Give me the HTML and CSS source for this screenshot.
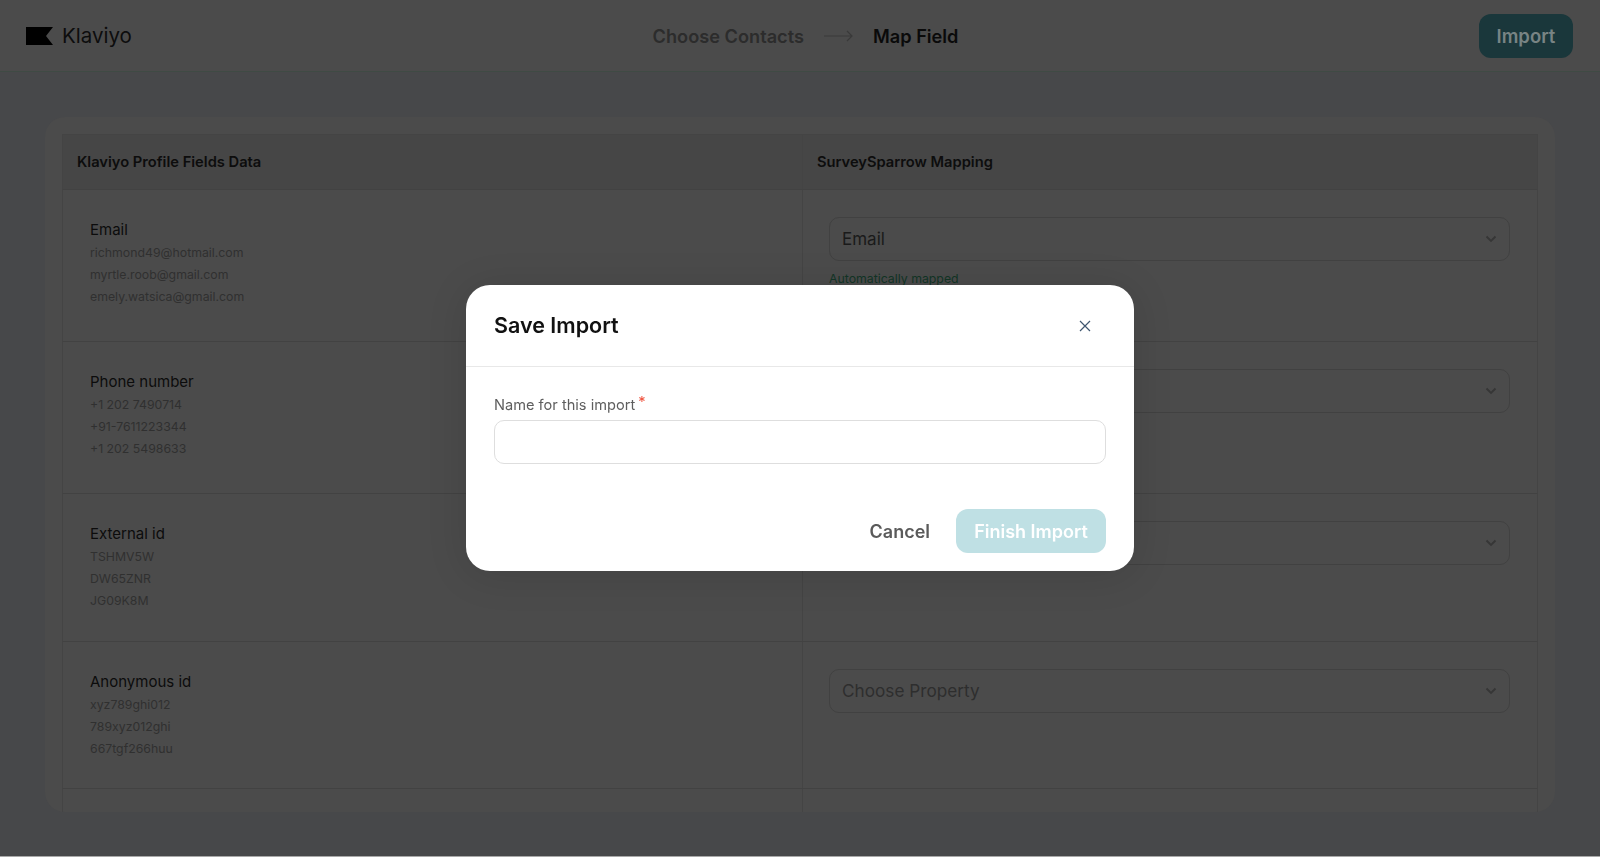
FILE: index.html
```html
<!DOCTYPE html>
<html lang="en">
<head>
  <meta charset="UTF-8" />
  <meta name="viewport" content="width=device-width, initial-scale=1.0" />
  <title>Map Field - Klaviyo Import</title>
  <link rel="stylesheet" href="styles.css">
</head>
<body>
  <div class="page">
    <header class="topbar">
      <div class="brand">
        <svg class="brand-flag" width="27" height="18" viewBox="0 0 27 18"><polygon points="0,0 27,0 20,9 27,18 0,18" fill="#000"/></svg>
        <span class="brand-name">Klaviyo</span>
      </div>
      <div class="steps">
        <span class="step">Choose Contacts</span>
        <svg class="step-arrow" width="29" height="12" viewBox="0 0 29 12"><path d="M0 6H28M23 1l5 5-5 5" fill="none" stroke="#3a3a3a" stroke-width="1.2"/></svg>
        <span class="step step-active">Map Field</span>
      </div>
      <button class="btn-import">Import</button>
    </header>

    <main class="content">
      <section class="card">
        <div class="table">
          <div class="row row-head">
            <div class="cell-head">Klaviyo Profile Fields Data</div>
            <div class="cell-head">SurveySparrow Mapping</div>
          </div>

          <div class="row">
            <div class="cell-left">
              <div class="field-name">Email</div>
              <div class="field-value">richmond49@hotmail.com</div>
              <div class="field-value">myrtle.roob@gmail.com</div>
              <div class="field-value">emely.watsica@gmail.com</div>
            </div>
            <div class="cell-right">
              <div class="select"><span class="select-text">Email</span><svg class="chev" width="12" height="8" viewBox="0 0 12 8"><path d="M1.5 1.5 6 6l4.5-4.5" fill="none" stroke="#363636" stroke-width="1.8"/></svg></div>
              <div class="mapped">Automatically mapped</div>
            </div>
          </div>

          <div class="row">
            <div class="cell-left">
              <div class="field-name">Phone number</div>
              <div class="field-value">+1 202 7490714</div>
              <div class="field-value">+91-7611223344</div>
              <div class="field-value">+1 202 5498633</div>
            </div>
            <div class="cell-right">
              <div class="select"><svg class="chev" width="12" height="8" viewBox="0 0 12 8"><path d="M1.5 1.5 6 6l4.5-4.5" fill="none" stroke="#363636" stroke-width="1.8"/></svg></div>
              <div class="mapped"></div>
            </div>
          </div>

          <div class="row">
            <div class="cell-left">
              <div class="field-name">External id</div>
              <div class="field-value">TSHMV5W</div>
              <div class="field-value">DW65ZNR</div>
              <div class="field-value">JG09K8M</div>
            </div>
            <div class="cell-right">
              <div class="select"><svg class="chev" width="12" height="8" viewBox="0 0 12 8"><path d="M1.5 1.5 6 6l4.5-4.5" fill="none" stroke="#363636" stroke-width="1.8"/></svg></div>
            </div>
          </div>

          <div class="row">
            <div class="cell-left">
              <div class="field-name">Anonymous id</div>
              <div class="field-value">xyz789ghi012</div>
              <div class="field-value">789xyz012ghi</div>
              <div class="field-value">667tgf266huu</div>
            </div>
            <div class="cell-right">
              <div class="select"><span class="select-text select-empty">Choose Property</span><svg class="chev" width="12" height="8" viewBox="0 0 12 8"><path d="M1.5 1.5 6 6l4.5-4.5" fill="none" stroke="#363636" stroke-width="1.8"/></svg></div>
            </div>
          </div>

          <div class="row row-last">
            <div class="cell-left"></div>
            <div class="cell-right"></div>
          </div>
        </div>
      </section>
    </main>
  </div>

  <div class="modal">
    <div class="modal-head">
      <h2 class="modal-title">Save Import</h2>
      <svg class="modal-close" width="12" height="12" viewBox="0 0 12 12"><path d="M1 1l10 10M11 1 1 11" fill="none" stroke="#3f5670" stroke-width="1.2"/></svg>
    </div>
    <div class="modal-body">
      <label class="modal-label">Name for this import<span class="req">*</span></label>
      <input class="modal-input" type="text" />
    </div>
    <div class="modal-foot">
      <button class="btn-cancel">Cancel</button>
      <button class="btn-finish">Finish Import</button>
    </div>
  </div>
</body>
</html>
```

FILE: styles.css
```css
* { box-sizing: border-box; }
html, body { height: 100%; }
body {
  margin: 0;
  font-family: Inter, "Noto Sans", sans-serif;
  background: #a9a9a9;
  color: #0c0c0c;
  overflow: hidden;
}
.page {
  height: 856px;
  background: #47484a;
  overflow: hidden;
}
.topbar {
  height: 72px;
  background: #4b4b4b;
  border-bottom: 1px solid #3f4a44;
  padding: 0 27px 0 26px;
  display: grid;
  grid-template-columns: 1fr auto 1fr;
  align-items: center;
}
.brand {
  display: flex;
  align-items: center;
  gap: 9px;
}
.brand-name {
  font-size: 20.5px;
  color: #0d0d0d;
}
.steps {
  display: flex;
  align-items: center;
  gap: 20px;
  padding-left: 12px;
}
.step {
  font-size: 18.2px;
  font-weight: 600;
  color: #2c2c2c;
}
.step-active { color: #0a0a0a; }
.btn-import {
  justify-self: end;
  width: 94px;
  height: 44px;
  border: none;
  border-radius: 12px;
  background: #1a373b;
  color: #788484;
  font: 600 18.5px Inter, sans-serif;
}
.content {
  padding: 45px 45px 0;
}
.card {
  height: 695px;
  background: #4b4b4b;
  border-radius: 20px;
  padding: 17px 17px 0;
  overflow: hidden;
}
.table {
  height: 100%;
  overflow: hidden;
}
.row {
  display: grid;
  grid-template-columns: 739px 1fr;
  border-bottom: 1px solid #424242;
  border-left: 1px solid #444;
  border-right: 1px solid #444;
}
.row-head {
  background: #464646;
  height: 56px;
  border-top: 1px solid #444;
}
.row-last { height: 40px; border-bottom: none; }
.cell-head {
  padding: 0 14px;
  display: flex;
  align-items: center;
  font-size: 14.7px;
  font-weight: 600;
  color: #0d0d0d;
}
.cell-head + .cell-head { border-left: 1px solid #444; }
.cell-left {
  padding: 29px 27px 28.5px;
}
.cell-right {
  border-left: 1px solid #444;
  padding: 27px 27px 0 26px;
}
.field-name {
  font-size: 15px;
  line-height: 22px;
  margin-bottom: 1px;
  color: #0c0c0c;
}
.field-value {
  font-size: 12.3px;
  line-height: 22px;
  color: #303030;
}
.select {
  height: 44px;
  border: 1px solid #414141;
  border-radius: 10px;
  padding: 0 12px;
  display: flex;
  align-items: center;
}
.chev { margin-left: auto; }
.select-text {
  font-size: 17px;
  color: #1a1a1a;
}
.select-empty { color: #2e2e2e; font-size: 17.2px; }
.mapped {
  margin-top: 8px;
  min-height: 72px;
  padding-bottom: 52px;
  font-size: 12.3px;
  line-height: 20px;
  color: #123526;
}

.modal {
  position: fixed;
  left: 466px;
  top: 285px;
  width: 668px;
  height: 286px;
  background: #fff;
  border-radius: 24px;
  box-shadow: 0 4px 40px rgba(0, 0, 0, 0.12);
  display: flex;
  flex-direction: column;
}
.modal-head {
  height: 82px;
  padding: 0 43px 0 28px;
  border-bottom: 1px solid #e8e8e8;
  display: flex;
  align-items: center;
  justify-content: space-between;
}
.modal-title {
  margin: -2px 0 0;
  font-size: 21.5px;
  font-weight: 600;
  color: #111;
}
.modal-body {
  padding: 28px 28px 0;
}
.modal-label {
  display: block;
  font-size: 14.6px;
  line-height: 20px;
  color: #5e5e5e;
  margin-bottom: 5px;
}
.req {
  color: #f0513c;
  margin-left: 3px;
  position: relative;
  top: -3px;
}
.modal-input {
  display: block;
  width: 100%;
  height: 44px;
  border: 1px solid #dedede;
  border-radius: 10px;
  background: #fff;
}
.modal-foot {
  margin-top: 45px;
  padding: 0 28px;
  display: flex;
  justify-content: flex-end;
  align-items: center;
  gap: 26px;
}
.btn-cancel {
  border: none;
  background: none;
  padding: 0;
  font: 600 18px Inter, sans-serif;
  color: #5a5a5a;
}
.btn-finish {
  width: 150px;
  height: 44px;
  border: none;
  border-radius: 12px;
  background: #bfe0e4;
  color: #fff;
  font: 600 18px Inter, sans-serif;
}
```
